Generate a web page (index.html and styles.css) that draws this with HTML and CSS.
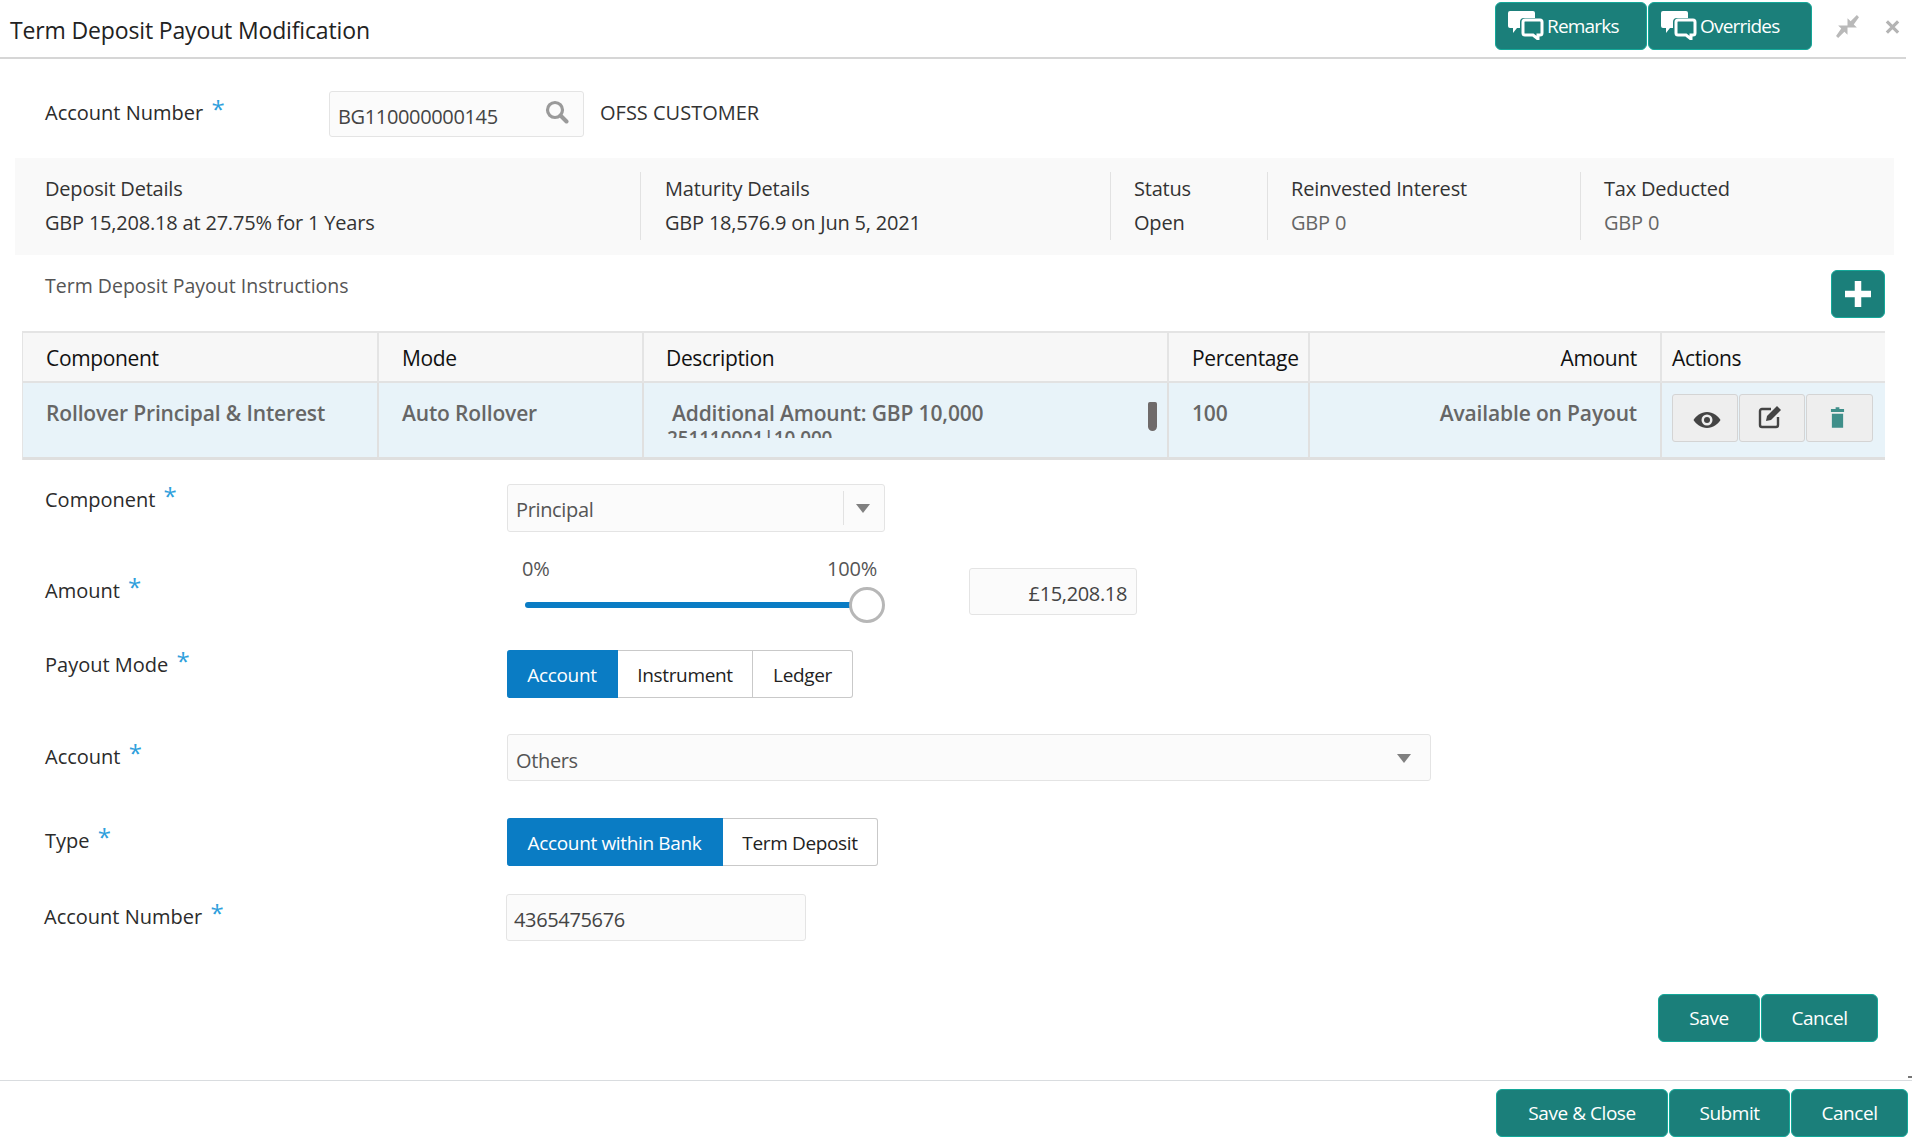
FILE: index.html
```html
<!DOCTYPE html>
<html lang="en">
<head>
<meta charset="utf-8">
<title>Term Deposit Payout Modification</title>
<link rel="stylesheet" href="styles.css">
</head>
<body>
<svg class="defs" width="0" height="0" aria-hidden="true">
  <symbol id="chat" viewBox="0 0 36 30">
    <path d="M2 1h23a2 2 0 0 1 2 2v5H16a4 4 0 0 0-4 4v6H9l-4 5v-5H2a2 2 0 0 1-2-2V3a2 2 0 0 1 2-2z" fill="#fff"/>
    <path d="M17 10h15a2 2 0 0 1 2 2v11a2 2 0 0 1-2 2h-2v4l-5-4h-8a2 2 0 0 1-2-2V12a2 2 0 0 1 2-2z" fill="none" stroke="#fff" stroke-width="3"/>
  </symbol>
</svg>
<header class="topbar">
  <h1 class="title">Term Deposit Payout Modification</h1>
  <div class="top-actions">
    <button class="btn btn-top"><svg class="chat-icon"><use href="#chat"/></svg>Remarks</button>
    <button class="btn btn-top btn-over"><svg class="chat-icon"><use href="#chat"/></svg>Overrides</button>
    <svg class="win-icon win-min" viewBox="0 0 24 24"><path d="M23 3l-2-2-6 6-3-3v9h9l-3-3zM1 21l2 2 6-6 3 3v-9H3l3 3z" fill="#b9b9b9"/></svg>
    <svg class="win-icon win-close" viewBox="0 0 16 16"><path d="M2 2l12 12M14 2L2 14" stroke="#b4b4b4" stroke-width="3.4" fill="none"/></svg>
  </div>
</header>

<section class="account-row">
  <label class="label label-account">Account Number <span class="req">*</span></label>
  <div class="field search-field">
    <span class="search-value">BG110000000145</span>
    <svg class="search-icon" viewBox="0 0 24 24"><circle cx="10" cy="10" r="7.5" fill="none" stroke="#9a9a9a" stroke-width="3.2"/><path d="M15.5 15.5l6 6" stroke="#9a9a9a" stroke-width="4" stroke-linecap="round"/></svg>
  </div>
  <span class="customer">OFSS CUSTOMER</span>
</section>

<section class="summary">
  <div class="sum-col sum-1"><div>Deposit Details</div><div>GBP 15,208.18 at 27.75% for 1 Years</div></div>
  <div class="sum-col sum-2"><div>Maturity Details</div><div>GBP 18,576.9 on Jun 5, 2021</div></div>
  <div class="sum-col sum-3"><div>Status</div><div>Open</div></div>
  <div class="sum-col sum-4"><div>Reinvested Interest</div><div class="muted">GBP 0</div></div>
  <div class="sum-col sum-5"><div>Tax Deducted</div><div class="muted">GBP 0</div></div>
</section>

<section class="section-head">
  <span class="section-title">Term Deposit Payout Instructions</span>
  <button class="btn btn-add" aria-label="Add"><svg viewBox="0 0 24 24" class="plus"><path d="M9 0h6v9h9v6h-9v9H9v-9H0V9h9z" fill="#fff"/></svg></button>
</section>

<table class="grid">
  <colgroup><col class="c1"><col class="c2"><col class="c3"><col class="c4"><col class="c5"><col class="c6"></colgroup>
  <thead>
    <tr><th>Component</th><th>Mode</th><th class="th-desc">Description</th><th>Percentage</th><th class="right">Amount</th><th class="th-actions">Actions</th></tr>
  </thead>
  <tbody>
    <tr>
      <td>Rollover Principal &amp; Interest</td>
      <td>Auto Rollover</td>
      <td class="desc-cell">
        <div class="desc">
          <div class="desc-1">Additional Amount: GBP 10,000</div>
          <div class="desc-2">251110001|10,000</div>
        </div>
        <span class="scroll-thumb"></span>
      </td>
      <td>100</td>
      <td class="right">Available on Payout</td>
      <td class="td-actions">
        <div class="row-actions">
          <button class="act" aria-label="View"><svg viewBox="0 0 28 18" class="ic-eye"><path d="M14 1C8 1 3 5 .5 9 3 13 8 17 14 17s11-4 13.500-8C25 5 20 1 14 1z" fill="#444"/><circle cx="14" cy="9" r="5.500" fill="#eee"/><circle cx="14" cy="9" r="3" fill="#444"/></svg></button>
          <button class="act" aria-label="Edit"><svg viewBox="0 0 24 24" class="ic-edit"><path d="M13 4H4a2 2 0 0 0-2 2v14a2 2 0 0 0 2 2h14a2 2 0 0 0 2-2v-8" fill="none" stroke="#444" stroke-width="2.4"/><path d="M19 1l4 4-10 10-5 1 1-5z" fill="#444"/></svg></button>
          <button class="act act-last" aria-label="Delete"><svg viewBox="0 0 16 22" class="ic-trash"><path d="M6 0h4v2h5v3H1V2h5zM2 7h12v15H2z" fill="#3f8f8a"/></svg></button>
        </div>
      </td>
    </tr>
  </tbody>
</table>

<form class="form">
  <div class="frow r-component">
    <label class="label lb-component">Component <span class="req">*</span></label>
    <div class="field select select-sm"><span>Principal</span><span class="sel-div"></span><span class="caret"></span></div>
  </div>
  <div class="frow r-amount">
    <label class="label lb-amount">Amount <span class="req">*</span></label>
    <div class="slider">
      <div class="slider-labels"><span>0%</span><span>100%</span></div>
      <div class="track"><span class="thumb"></span></div>
    </div>
    <div class="field amount-field">£15,208.18</div>
  </div>
  <div class="frow r-payout">
    <label class="label lb-payout">Payout Mode <span class="req">*</span></label>
    <div class="seg">
      <span class="seg-item on s-account">Account</span><span class="seg-item s-instr">Instrument</span><span class="seg-item s-ledger">Ledger</span>
    </div>
  </div>
  <div class="frow r-account">
    <label class="label lb-account">Account <span class="req">*</span></label>
    <div class="field select select-lg"><span>Others</span><span class="caret caret-lg"></span></div>
  </div>
  <div class="frow r-type">
    <label class="label lb-type">Type <span class="req">*</span></label>
    <div class="seg">
      <span class="seg-item on s-within">Account within Bank</span><span class="seg-item s-term">Term Deposit</span>
    </div>
  </div>
  <div class="frow r-number">
    <label class="label lb-number">Account Number <span class="req">*</span></label>
    <div class="field number-field">4365475676</div>
  </div>
  <div class="form-actions">
    <button type="button" class="btn b-save">Save</button><button type="button" class="btn b-cancel">Cancel</button>
  </div>
</form>

<footer class="footer">
  <span class="corner-mark"></span>
  <button class="btn f-save">Save &amp; Close</button><button class="btn f-submit">Submit</button><button class="btn f-cancel">Cancel</button>
</footer>
</body>
</html>
```
FILE: styles.css
```css
* { box-sizing: border-box; }
html, body { margin: 0; padding: 0; }
body {
  width: 1916px; height: 1140px; overflow: hidden; position: relative;
  background: #fff; color: #2b2b2b;
  font-family: "Open Sans", "Noto Sans", sans-serif;
  font-size: 20px; letter-spacing: -0.35px;
}
.defs { position: absolute; }
button { font: inherit; cursor: pointer; margin: 0; }

.btn {
  display: inline-flex; align-items: center; justify-content: center;
  height: 48px; padding: 0; color: #fff; background: #1b7f7a;
  border: 1px solid #14a899; border-radius: 6px;
  font-size: 19px; letter-spacing: -0.45px;
}

.topbar {
  height: 59px; width: 1906px; display: flex; justify-content: space-between;
  border-bottom: 2px solid #d6d6d6;
}
.title { margin: 17px 0 0 10px; font-size: 23px; font-weight: 400; line-height: 26px; color: #222; letter-spacing: -0.15px; }
.top-actions { display: flex; align-items: flex-start; padding: 2px 6px 0 0; }
.btn-top { width: 152px; gap: 3px; justify-content: flex-start; padding-left: 12px; letter-spacing: -0.8px; }
.btn-over { width: 164px; margin-left: 1px; }
.chat-icon { width: 36px; height: 30px; margin-top: -2px; }
.win-icon { flex: none; }
.win-min { width: 25px; height: 25px; margin: 12px 0 0 23px; }
.win-close { width: 15px; height: 16px; margin: 17px 0 0 25px; }

.label { color: #2b2b2b; display: block; letter-spacing: 0; }
.req { color: #2f9fdc; font-size: 24px; line-height: 20px; position: relative; top: -2px; margin-left: 3px; }
.field { background: #fbfbfb; border: 1px solid #e4e4e4; border-radius: 3px; color: #444; }

.account-row { display: flex; padding: 32px 0 0 45px; height: 78px; }
.label-account { width: 284px; padding-top: 8px; line-height: 28px; }
.search-field { width: 255px; height: 46px; display: flex; align-items: center; justify-content: space-between; padding: 4px 14px 0 8px; }
.search-value { color: #444; }
.search-icon { width: 24px; height: 24px; margin-top: -8px; }
.customer { margin: 8px 0 0 16px; line-height: 28px; color: #333; letter-spacing: 0; }

.summary {
  margin: 21px 0 0 15px; width: 1879px; height: 97px; background: #f9f9f9;
  display: grid; grid-template-columns: 625px 470px 157px 313px 1fr;
  align-items: start; padding-top: 14px; letter-spacing: -0.2px;
}
.sum-col { height: 68px; padding: 0 0 0 30px; line-height: 34px; color: #333; border-left: 1px solid #e2e2e2; }
.sum-1 { border-left: 0; }
.sum-2 { padding-left: 24px; }
.sum-3, .sum-4, .sum-5 { padding-left: 23px; }
.muted { color: #666; }

.section-head { display: flex; justify-content: space-between; padding: 15px 31px 0 45px; height: 76px; }
.section-title { color: #555; line-height: 32px; font-size: 19.5px; letter-spacing: 0; }
.btn-add { width: 54px; }
.plus { width: 26px; height: 26px; }

.grid {
  margin-left: 22px; width: 1863px; table-layout: fixed; border-collapse: separate; border-spacing: 0;
  border-top: 2px solid #e4e4e4; border-left: 1px solid #e4e4e4;
}
.c1 { width: 356px; } .c2 { width: 265px; } .c3 { width: 525px; } .c4 { width: 141px; } .c5 { width: 352px; } .c6 { width: 223px; }
.grid th {
  height: 50px; padding: 2px 0 0 23px; background: #f7f7f7; text-align: left; font-weight: 400;
  color: #111; border-bottom: 2px solid #e2e2e2; border-right: 2px solid #e4e4e4;
  font-size: 21px;
}
.grid td {
  height: 77px; padding: 16px 0 0 23px; background: #e8f3f9; color: #666; vertical-align: top;
  border-bottom: 3px solid #dfdfdf; border-right: 2px solid #e0e0e0; line-height: 28px; font-weight: 600;
  font-size: 21px; letter-spacing: -0.15px;
}
.grid th:last-child, .grid td:last-child { border-right: 0; }
.grid th.th-desc { padding-left: 22px; }
.grid th.right, .grid td.right { text-align: right; padding-right: 23px; }
.grid th.th-actions { padding-left: 10px; }
.grid td.td-actions { padding: 11px 0 0 10px; }
.grid td.desc-cell { position: relative; padding: 0; }
.desc { height: 55px; overflow: hidden; padding: 16px 0 0 23px; }
.desc-1 { line-height: 28px; padding-left: 5px; }
.desc-2 { line-height: 23px; font-size: 19px; }
.scroll-thumb { position: absolute; right: 10px; top: 19px; width: 9px; height: 29px; background: #6f6a6a; border-radius: 2px 2px 5px 5px; }
.row-actions { display: flex; gap: 1px; }
.act { width: 66px; height: 48px; background: #eee; border: 1px solid #d4d4d4; border-radius: 3px; display: flex; align-items: center; justify-content: center; padding: 0; }
.act-last { width: 67px; }
.ic-eye { width: 28px; height: 18px; margin: 4px 0 0 3px; }
.ic-edit { width: 24px; height: 24px; margin: -2px 0 0 -4px; }
.ic-trash { width: 15px; height: 21px; margin: -2px 0 0 -4px; }

.form { height: 620px; }
.frow { display: flex; padding-left: 45px; }
.frow > .label { width: 462px; line-height: 28px; flex: none; }
.r-component { margin-top: 24px; height: 48px; }
.lb-component { padding-top: 2px; }
.select { display: flex; align-items: center; padding: 2px 0 0 8px; position: relative; color: #555; }
.select-sm { width: 378px; height: 48px; }
.select-lg { width: 924px; height: 47px; padding-top: 5px; }
.sel-div { position: absolute; left: 335px; top: 6px; width: 1px; height: 34px; background: #e2e2e2; }
.caret { position: absolute; right: 14px; top: 19px; width: 0; height: 0; border: 7px solid transparent; border-top: 9px solid #808080; border-bottom: 0; }
.caret-lg { right: 19px; }

.r-amount { margin-top: 23px; height: 68px; }
.lb-amount { padding-top: 22px; }
.slider { width: 378px; position: relative; }
.slider-labels { display: flex; justify-content: space-between; padding: 0 8px 0 15px; line-height: 28px; color: #555; letter-spacing: -0.2px; }
.track { position: absolute; left: 18px; top: 47px; width: 345px; height: 6px; background: #0a7cc4; border-radius: 3px; }
.thumb { position: absolute; right: -15px; top: -15px; width: 36px; height: 36px; background: #fff; border: 3px solid #b7b7b7; border-radius: 50%; }
.amount-field { width: 168px; height: 47px; margin: 13px 0 0 84px; text-align: right; padding: 0 9px 0 0; line-height: 49px; color: #444; }

.r-payout { margin-top: 27px; height: 48px; }
.lb-payout { padding-top: 1px; }
.seg { display: flex; height: 48px; font-size: 19px; }
.seg-item { display: flex; align-items: center; justify-content: center; background: #fff; color: #222; border: 1px solid #c9c9c9; border-left: 0; padding-top: 1px; }
.seg-item:last-child { border-radius: 0 3px 3px 0; }
.seg-item.on { background: #0a7cc4; color: #fff; border-color: #0a7cc4; border-radius: 3px 0 0 3px; }
.s-account { width: 111px; } .s-instr { width: 135px; } .s-ledger { width: 100px; }
.s-within { width: 216px; } .s-term { width: 155px; }

.r-account { margin-top: 36px; height: 47px; }
.lb-account { padding-top: 9px; }
.r-type { margin-top: 37px; height: 48px; }
.lb-type { padding-top: 9px; }
.r-number { margin-top: 28px; height: 47px; padding-left: 44px; }
.lb-number { padding-top: 9px; }
.number-field { width: 300px; height: 47px; padding: 0 0 0 7px; line-height: 49px; color: #444; }

.form-actions { display: flex; justify-content: flex-end; gap: 1px; padding-right: 38px; margin-top: 53px; }
.b-save { width: 102px; } .b-cancel { width: 117px; }

.footer {
  position: absolute; left: 0; top: 1080px; width: 1912px; height: 60px;
  border-top: 1px solid #d9dcdf; display: flex; justify-content: flex-end; gap: 1px;
  padding: 8px 4px 0 0;
}
.f-save { width: 172px; } .f-submit { width: 121px; } .f-cancel { width: 117px; }
.corner-mark { position: absolute; right: 0; top: -5px; width: 4px; height: 2px; background: #777; }
```
